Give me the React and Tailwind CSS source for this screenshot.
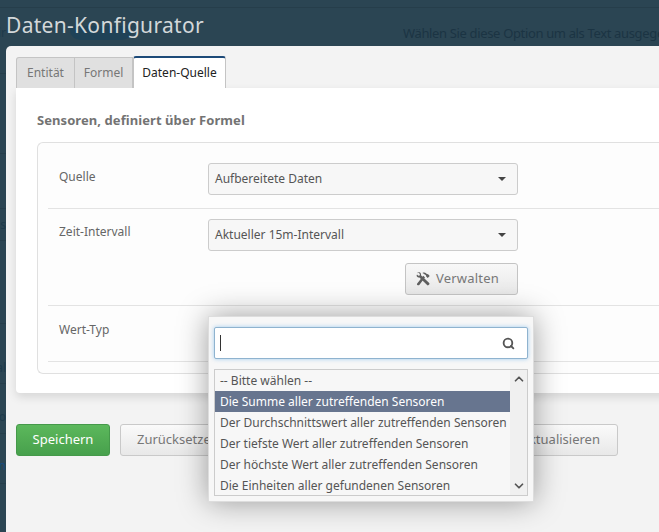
import React from "react";
import { Search, ChevronUp, ChevronDown } from "lucide-react";

function SelectBox({ label }) {
  return (
    <div className="flex h-[32px] w-[310px] items-center justify-between rounded-[3px] border border-[#cccccc] bg-[#f7f7f7] pl-[6px] pr-[11px] text-[12px] text-[#555555]">
      <span>{label}</span>
      <span className="h-0 w-0 border-x-[4px] border-t-[4px] border-x-transparent border-t-[#444444]" />
    </div>
  );
}

function Tools() {
  return (
    <svg viewBox="0 0 14 14" className="h-[14px] w-[14px] shrink-0" fill="#5f5f5f">
      <path d="M1 1.200 2.600.8 3.900 2.100 3.700 3.400 2.400 3.700 1 2.400.6 3.600c0 1 .9 1.900 1.900 1.900l.9-.1 7.700 7.700c.4.400 1.100.400 1.500 0l.6-.6c.4-.4.400-1.100 0-1.500L5 3.300c.2-1-.1-2-1-2.700C3.100 0 1.900 0 1 1.200z" />
      <path d="M6.400.9c1.500-.7 2.900-.4 3.900.5l.8.8.8-.1 1.800 1.800-2 2-1.700-1.700.1-.8-.8-.6C8.600 2 7.800 1.700 6.400.9z" />
      <path d="M7.300 3.700 9 5.500 3.300 12.900c-.5.600-1.400.600-1.900.1-.6-.5-.6-1.300 0-1.800z" />
    </svg>
  );
}

const stripLines = [73, 153, 208, 240, 323, 383, 433, 483];
const stripGhosts = [
  { text: "voir", top: 25, color: "text-[#1e3a4a]" },
  { text: "ss", top: 217, color: "text-[#1e3a4a]" },
  { text: "al", top: 360, color: "text-[#1e3a4a]" },
  { text: "so", top: 409, color: "text-[#1e3a4a]" },
  { text: "n", top: 458, color: "text-[#174a7c]" },
];

export default function App() {
  const rows = [
    "-- Bitte wählen --",
    "Die Summe aller zutreffenden Sensoren",
    "Der Durchschnittswert aller zutreffenden Sensoren",
    "Der tiefste Wert aller zutreffenden Sensoren",
    "Der höchste Wert aller zutreffenden Sensoren",
    "Die Einheiten aller gefundenen Sensoren",
  ];
  return (
    <div className="relative h-[532px] w-[659px] overflow-hidden bg-[#2b4553] font-['Noto_Sans','Open_Sans',sans-serif]">
      {/* dimmed page behind the dialog */}
      <div className="absolute left-0 top-[7px] h-px w-full bg-[#263e4b]" />
      {stripLines.map((y) => (
        <div key={y} className="absolute left-0 h-px w-[6px] bg-[#263e4b]" style={{ top: y }} />
      ))}
      {stripGhosts.map((g) => (
        <div
          key={g.top}
          className={"absolute left-0 flex h-[16px] w-[6px] justify-end overflow-hidden whitespace-nowrap text-[12px] leading-[16px] " + g.color}
          style={{ top: g.top }}
        >
          {g.text}
        </div>
      ))}
      <div className="absolute left-[403px] top-[24px] h-[22px] w-[256px] overflow-hidden whitespace-nowrap text-[13px] leading-[18px] tracking-[-0.35px] text-[#1b3443]">
        Wählen Sie diese Option um als Text ausgegeben
      </div>
      <div className="absolute left-[70px] top-[26px] h-[14px] w-[62px] rounded-b-[10px] bg-[#1f4257]" />

      <h1 className="absolute left-[6px] top-[10px] text-[21px] leading-[30px] tracking-[0.3px] text-[#d3d8da]">
        Daten-Konfigurator
      </h1>

      {/* dialog */}
      <div className="absolute left-[6px] top-[46px] h-[500px] w-[700px] rounded-tl-[5px] bg-[#f3f3f3] pl-[10px] pt-[10px]">
        {/* tabs */}
        <div className="flex h-[32px] items-end text-[12px]">
          <div className="flex h-[31px] w-[59px] items-center justify-center rounded-tl-[3px] border border-b-0 border-[#c4c4c4] bg-[#e0e0e0] text-[#777777]">
            Entität
          </div>
          <div className="flex h-[31px] w-[58px] items-center justify-center border-r border-t border-[#c4c4c4] bg-[#e0e0e0] text-[#777777]">
            Formel
          </div>
          <div className="flex h-[32px] w-[93px] items-center justify-center rounded-t-[3px] border-x border-t-2 border-[#c4c4c4] border-t-[#1d4a78] bg-white text-[#222222]">
            Daten-Quelle
          </div>
        </div>

        {/* content */}
        <div className="h-[305px] rounded-bl-[4px] bg-white pl-[21px] pt-[22px] shadow-[0_4px_10px_rgba(0,0,0,0.12)]">
          <h2 className="text-[13px] font-bold leading-[20px] tracking-[0.07px] text-[#737373]">Sensoren, definiert über Formel</h2>
          <div className="mt-[12px] h-[232px] rounded-l-[6px] border border-r-0 border-[#e0e0e0] bg-[#fdfdfd] pl-[10px]">
            <div className="flex h-[66px] items-start border-b border-[#e3e3e3] pt-[20px]">
              <div className="w-[160px] pl-[11px] pt-[6px] text-[12px] leading-[16px] text-[#666666]">Quelle</div>
              <SelectBox label="Aufbereitete Daten" />
            </div>
            <div className="flex h-[97px] items-start border-b border-[#e3e3e3] pt-[10px]">
              <div className="w-[160px] pl-[11px] pt-[5px] text-[12px] leading-[16px] text-[#666666]">Zeit-Intervall</div>
              <div className="flex flex-col items-end">
                <SelectBox label="Aktueller 15m-Intervall" />
                <button className="mt-[12px] flex h-[32px] w-[113px] items-center gap-[6px] rounded-[3px] border border-[#c4c4c4] bg-gradient-to-b from-[#f8f8f8] to-[#e8e8e8] pl-[10px] text-[13px] tracking-[0.2px] text-[#777777]">
                  <Tools />
                  Verwalten
                </button>
              </div>
            </div>
            <div className="flex h-[56px] items-start border-b border-[#e3e3e3] pl-[11px] pt-[16px] text-[12px] leading-[16px] text-[#666666]">
              Wert-Typ
            </div>
          </div>
        </div>

        {/* footer buttons */}
        <div className="mt-[31px] flex gap-[10px] text-[13px]">
          <button className="h-[32px] w-[94px] rounded-[3px] border border-[#45994a] bg-gradient-to-b from-[#5cb85c] to-[#47a04c] text-white">
            Speichern
          </button>
          <button className="h-[32px] w-[190px] rounded-[3px] border border-[#c9c9c9] bg-gradient-to-b from-[#fafafa] to-[#e8e8e8] pl-[16px] text-left text-[#777777]">
            Zurücksetzen
          </button>
          <button className="h-[32px] w-[298px] rounded-[3px] border border-[#c9c9c9] bg-gradient-to-b from-[#fafafa] to-[#e8e8e8] pr-[17px] text-right text-[#777777]">
            Aktualisieren
          </button>
        </div>
      </div>

      {/* dropdown popup */}
      <div className="absolute left-[208px] top-[316px] h-[186px] w-[326px] border border-[#dddddd] bg-[#f7f7f7] px-[5px] pt-[10px] shadow-[0_0_28px_rgba(0,0,0,0.38)]">
        <div className="flex h-[32px] items-center justify-between rounded-[2px] border border-[#8fb3cf] bg-white pl-[5px] pr-[12px] shadow-[0_0_4px_rgba(102,175,233,0.6)]">
          <span className="h-[16px] w-px bg-[#333333]" />
          <Search size={13} strokeWidth={3.4} className="text-[#555555]" />
        </div>
        <div className="mt-[10px] flex h-[127px] border border-[#cccccc] bg-[#f7f7f7] text-[12px] text-[#555555]">
          <div className="w-[295px] whitespace-nowrap">
            {rows.map((r, i) => (
              <div
                key={r}
                className={
                  "flex h-[21px] items-center px-[5px] " +
                  (i === 1 ? "bg-[#67758f] text-white" : "")
                }
              >
                {r}
              </div>
            ))}
          </div>
          <div className="flex flex-1 flex-col items-center justify-between bg-[#f0f0f0] py-[2px] text-[#555555]">
            <ChevronUp size={14} strokeWidth={3} />
            <ChevronDown size={14} strokeWidth={3} />
          </div>
        </div>
      </div>
    </div>
  );
}
